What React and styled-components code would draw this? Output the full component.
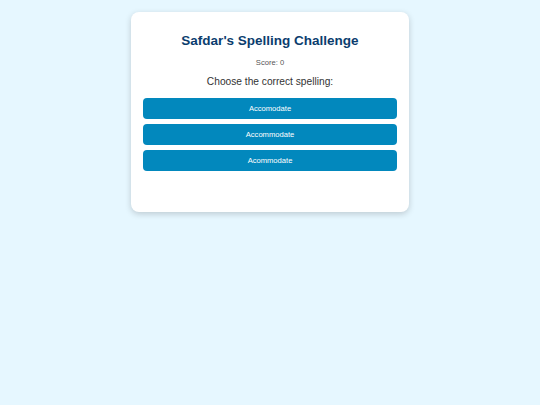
import React, { useState } from 'react';
import styled, { createGlobalStyle } from 'styled-components';

const GlobalStyle = createGlobalStyle`
  html, body {
    margin: 0;
    padding: 0;
    background: #e6f7ff;
    font-family: "Liberation Sans", Arial, sans-serif;
  }
`;

const Page = styled.div`
  min-height: 405px;
  display: flex;
  justify-content: center;
  align-items: flex-start;
  padding-top: 12px;
  box-sizing: border-box;
`;

const Card = styled.div`
  width: 278px;
  height: 200px;
  box-sizing: border-box;
  background: #ffffff;
  border-radius: 8px;
  box-shadow: 0 2px 6px rgba(0, 0, 0, 0.18);
  padding: 20px 12px;
  display: flex;
  flex-direction: column;
  align-items: center;
`;

const Title = styled.h1`
  margin: 0;
  font-size: 13.5px;
  font-weight: bold;
  color: #0b3d6e;
  line-height: 18px;
`;

const Score = styled.p`
  margin: 8px 0 0;
  font-size: 7.6px;
  line-height: 9px;
  color: #555555;
`;

const Question = styled.p`
  margin: 9px 0 0;
  font-size: 10.2px;
  line-height: 12px;
  color: #333333;
`;

const Options = styled.div`
  margin-top: 10px;
  width: 100%;
  display: flex;
  flex-direction: column;
  gap: 5px;
`;

const Option = styled.button`
  width: 100%;
  height: 21px;
  border: none;
  border-radius: 4px;
  background: #0288bd;
  color: #ffffff;
  font-family: "Liberation Sans", Arial, sans-serif;
  font-size: 7.6px;
  cursor: pointer;
  padding: 0;

  &:hover {
    background: #0277a6;
  }
`;

const words = ['Accomodate', 'Accommodate', 'Acommodate'];

export default function App() {
  const [score, setScore] = useState(0);

  return (
    <>
      <GlobalStyle />
      <Page>
        <Card>
          <Title>Safdar's Spelling Challenge</Title>
          <Score>Score: {score}</Score>
          <Question>Choose the correct spelling:</Question>
          <Options>
            {words.map((w) => (
              <Option key={w} onClick={() => w === 'Accommodate' && setScore(score + 1)}>
                {w}
              </Option>
            ))}
          </Options>
        </Card>
      </Page>
    </>
  );
}
